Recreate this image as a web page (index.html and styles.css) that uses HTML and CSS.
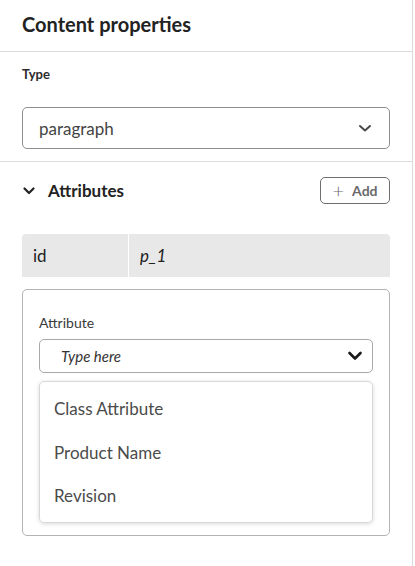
FILE: index.html
```html
<!DOCTYPE html>
<html>
<head>
<meta charset="utf-8">
<link rel="stylesheet" href="styles.css">
</head>
<body>
<div class="panel">
  <div class="header"><h1 class="title">Content properties</h1></div>
  <div class="section type-section">
    <div class="label-strong">Type</div>
    <div class="select">
      <span class="select-value">paragraph</span>
      <svg class="chev" width="14" height="10" viewBox="0 0 14 10"><path d="M2 3 L7 7.5 L12 3" fill="none" stroke="#4b4b4b" stroke-width="2" stroke-linecap="round" stroke-linejoin="round"/></svg>
    </div>
  </div>
  <div class="section attr-section">
    <div class="attr-head">
      <div class="attr-title">
        <svg width="14" height="10" viewBox="0 0 14 10"><path d="M2.5 2.5 L7 7 L11.5 2.5" fill="none" stroke="#222" stroke-width="2.2" stroke-linecap="round" stroke-linejoin="round"/></svg>
        <span>Attributes</span>
      </div>
      <button class="add-btn"><span class="plus">+</span><span class="add-text">Add</span></button>
    </div>
    <div class="attr-table">
      <div class="cell key">id</div>
      <div class="cell val">p_1</div>
    </div>
    <div class="card">
      <div class="label">Attribute</div>
      <div class="input">
        <span class="placeholder">Type here</span>
        <svg width="16" height="10" viewBox="0 0 16 10"><path d="M2.5 2 L8 7.5 L13.5 2" fill="none" stroke="#1a1a1a" stroke-width="2.6" stroke-linecap="round" stroke-linejoin="round"/></svg>
      </div>
      <ul class="menu">
        <li>Class Attribute</li>
        <li>Product Name</li>
        <li>Revision</li>
      </ul>
    </div>
  </div>
</div>
</body>
</html>
```
FILE: styles.css
```css
* { box-sizing: border-box; }
body {
  margin: 0;
  font-family: "Lato", "Open Sans", sans-serif;
  color: #222;
  background: #fff;
}
.panel {
  width: 413px;
  height: 566px;
  border-right: 1px solid #dcdcdc;
}
.header {
  height: 52px;
  border-bottom: 1px solid #dcdcdc;
  display: flex;
  align-items: center;
  padding: 0 22px 3px;
}
.title {
  margin: 0;
  font-size: 20px;
  font-weight: 700;
  color: #222;
}
.type-section {
  padding: 14px 22px 12px;
  border-bottom: 1px solid #dcdcdc;
}
.label-strong {
  font-size: 13px;
  font-weight: 700;
  color: #2c2c2c;
  line-height: 16px;
  margin-bottom: 25px;
}
.select {
  height: 42px;
  border: 1px solid #8e8e8e;
  border-radius: 5px;
  display: flex;
  align-items: center;
  justify-content: space-between;
  padding: 0 17px 0 16px;
}
.select-value {
  font-size: 17px;
  color: #444;
}
.attr-section {
  padding: 15px 22px 0;
}
.attr-head {
  display: flex;
  align-items: center;
  justify-content: space-between;
  height: 27px;
}
.attr-title {
  display: flex;
  align-items: center;
  gap: 12px;
  font-size: 17px;
  font-weight: 700;
  color: #222;
}
.add-btn {
  width: 70px;
  height: 27px;
  border: 1px solid #6e6e6e;
  border-radius: 5px;
  background: #fff;
  display: flex;
  align-items: center;
  justify-content: center;
  gap: 8px;
  font-family: inherit;
  color: #6a6a6a;
  padding: 0 0 1px;
}
.plus {
  font-size: 20px;
  font-weight: 300;
  line-height: 1;
}
.add-text {
  font-size: 14px;
  font-weight: 700;
}
.attr-table {
  margin-top: 30px;
  display: grid;
  grid-template-columns: 106px 1fr;
  gap: 1px;
  background: #fff;
  border-radius: 4px 4px 0 0;
  overflow: hidden;
}
.cell {
  background: #e8e8e8;
  height: 43px;
  display: flex;
  align-items: center;
  font-size: 17px;
  color: #222;
}
.key { padding-left: 11px; }
.val { padding-left: 11px; font-style: italic; }
.card {
  margin-top: 12px;
  border: 1px solid #b3b3b3;
  border-radius: 5px;
  padding: 24px 16px 11px;
  height: 247px;
}
.label {
  font-size: 14px;
  color: #3a3a3a;
  line-height: 18px;
  margin-bottom: 7px;
}
.input {
  height: 34px;
  border: 1px solid #a8a8a8;
  border-radius: 5px;
  display: flex;
  align-items: center;
  justify-content: space-between;
  padding: 0 9px 0 21px;
}
.placeholder {
  font-size: 15px;
  font-style: italic;
  color: #333;
}
.menu {
  list-style: none;
  margin: 8px 0 0;
  padding: 5px 0;
  border: 1px solid #d8d8d8;
  border-radius: 5px;
  box-shadow: 0 1px 4px rgba(0,0,0,0.15);
  height: 142px;
}
.menu li {
  height: 43.5px;
  display: flex;
  align-items: center;
  padding-left: 14px;
  font-size: 17px;
  color: #4b4b4b;
}
```
